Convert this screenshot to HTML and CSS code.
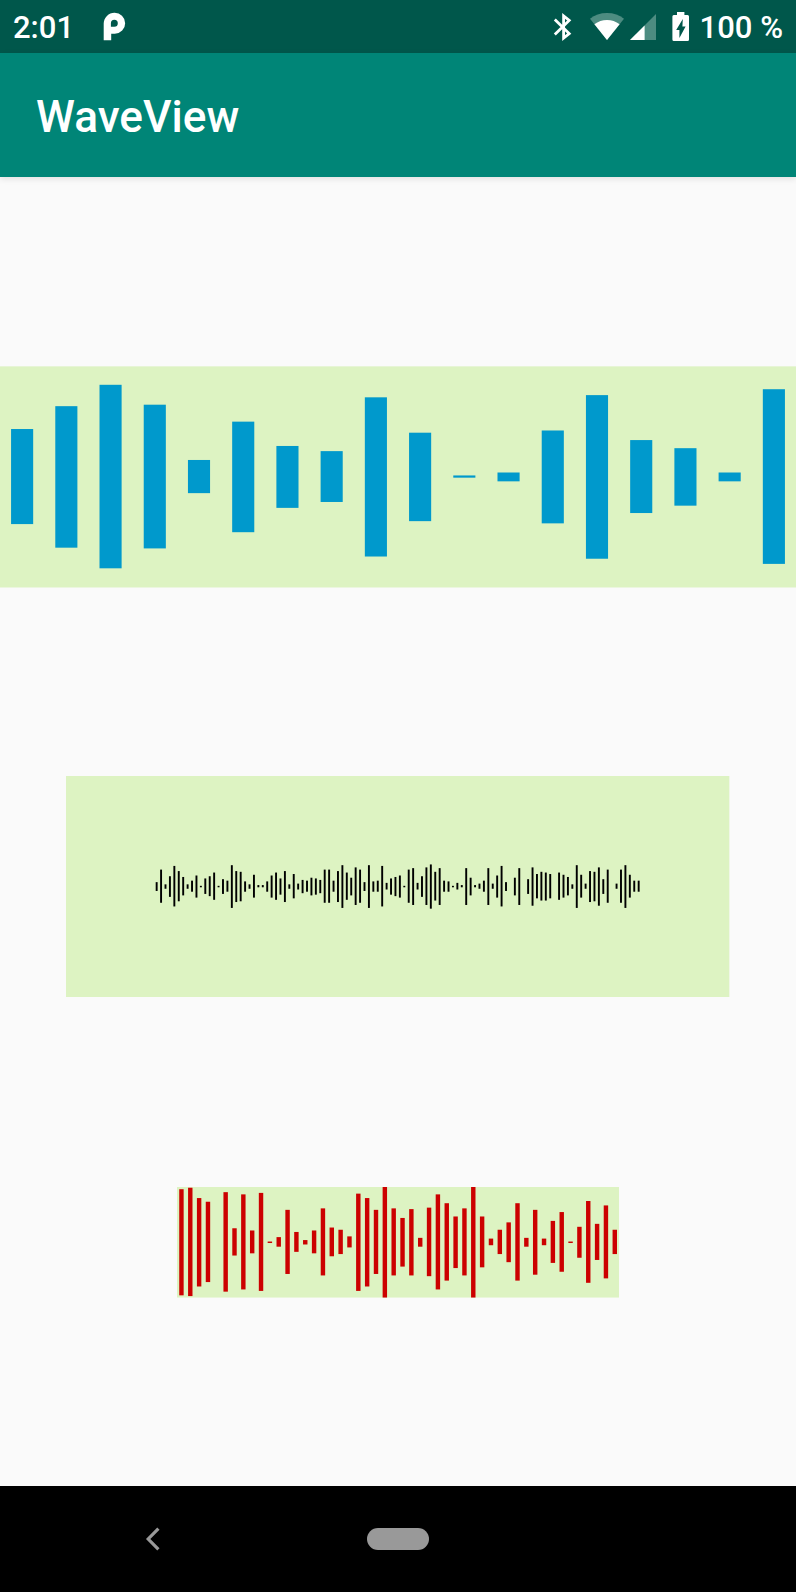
FILE: index.html
```
<!DOCTYPE html>
<html lang="en">
<head>
<meta charset="utf-8">
<title>WaveView</title>
<link rel="stylesheet" href="styles.css">
</head>
<body>
<div class="screen">
  <div class="status-bar">
    <span class="clock">2:01</span>
    <svg class="icon-p" width="24" height="30" viewBox="0 0 24 30"><path fill="#fff" fill-rule="evenodd" d="M1.7 28.3V11.5A10.8 10.8 0 0 1 12.5 .8A10.4 10.4 0 0 1 12.8 21.8H9.2V28.3ZM12.3 7.8A3.5 3.5 0 0 0 8.9 11.3V14.8H12.3A3.5 3.5 0 0 0 12.3 7.8Z"/></svg>
    <div class="status-icons">
      <svg class="icon-bt" width="20" height="30" viewBox="0 0 20 30"><path fill="none" stroke="#fff" stroke-width="2.8" d="M1.8 7.4L16.2 21.6L10.6 26V4L16.2 8.4L1.8 22.6"/></svg>
      <svg class="icon-wifi" width="36" height="30" viewBox="0 0 36 30"><path fill="#4d8c81" d="M18 28L1 6.8Q8 1 18 1T35 6.8Z"/><path fill="#fff" d="M18 28L5.4 12.2Q11 7.9 18 7.9T30.6 12.2Z"/></svg>
      <svg class="icon-cell" width="26" height="30" viewBox="0 0 26 30"><path fill="#4d8c81" d="M0 28L26 2V28Z"/><path fill="#fff" d="M0 28L14.6 13.4V28Z"/></svg>
      <svg class="icon-battery" width="18" height="30" viewBox="0 0 18 30"><path fill="#fff" fill-rule="evenodd" d="M5 0H12.4V3H15.6Q17 3 17 4.5V27.5Q17 29 15.6 29H1.8Q.4 29 .4 27.5V4.5Q.4 3 1.8 3H5ZM10.8 7L4.2 18H7.4V26L13.6 14.4H10.4Z"/></svg>
      <span class="battery-text">100 %</span>
    </div>
  </div>
  <header class="app-bar"><h1 class="title">WaveView</h1></header>
  <main class="content">
    <svg class="wave wave-large" viewBox="0 0 1080 301" data-wave="large"></svg>
    <svg class="wave wave-medium" viewBox="0 0 900 300" data-wave="medium"></svg>
    <svg class="wave wave-small" viewBox="0 0 600 150" data-wave="small"></svg>
  </main>
  <nav class="nav-bar">
    <svg class="nav-back" width="16" height="24" viewBox="0 0 16 24"><path fill="none" stroke="#999" stroke-width="3.2" d="M13.4 1.6L3.2 12L13.4 22.4"/></svg>
    <div class="nav-home"></div>
    <div></div>
  </nav>
</div>
<script src="waves.js"></script>
</body>
</html>
```
FILE: styles.css
```
html, body { margin: 0; padding: 0; }
.screen {
  width: 796px;
  height: 1592px;
  display: flex;
  flex-direction: column;
  overflow: hidden;
  background: #fafafa;
  font-family: Roboto, "Liberation Sans", sans-serif;
  color: #fff;
}
.status-bar {
  flex: 0 0 53px;
  box-sizing: border-box;
  display: flex;
  align-items: center;
  padding: 1px 13px 0 13px;
  background: #00574b;
  font-size: 31px;
  font-weight: 500;
  line-height: 36px;
}
.clock { width: 60px; padding-top: 2px; }
.icon-p { margin-left: 29px; }
.status-icons { margin-left: auto; display: flex; align-items: center; }
.icon-wifi { margin-left: 16px; }
.icon-cell { margin-left: 5px; }
.icon-battery { margin-left: 16px; }
.battery-text { margin-left: 10px; padding-top: 2px; white-space: nowrap; }
.app-bar {
  flex: 0 0 124px;
  box-sizing: border-box;
  display: flex;
  align-items: center;
  padding: 3px 36px 0;
  background: #008577;
  box-shadow: 0 2px 6px rgba(0, 0, 0, .1);
}
.title { margin: 0; font-size: 44.2px; font-weight: 500; line-height: 52px; }
.content {
  flex: 1;
  display: flex;
  flex-direction: column;
  align-items: center;
  padding-top: 189px;
}
.wave { display: block; flex: none; overflow: hidden; }
.wave-large { width: 796px; height: 221.85px; }
.wave-medium { width: 663.33px; height: 221.11px; margin-top: 188.15px; }
.wave-small { width: 442.22px; height: 110.56px; margin-top: 189.9px; }
.nav-bar {
  flex: 0 0 106px;
  display: grid;
  grid-template-columns: 1fr 62px 1fr;
  align-items: center;
  background: #000;
}
.nav-back { margin-left: 145px; }
.nav-home { height: 22px; border-radius: 11px; background: #999; }
```
FILE: waves.js
```
// Each wave is a list of amplitudes in percent of the wave's height.
const waves = {
  large: {
    color: "#0099cc", x: 15, step: 60, bar: 30, height: 300, top: 0.5,
    data: [43,64,83,65,15,50,28,23,72,40,1,4,42,74,33,26,4,79]
  },
  medium: {
    color: "#000000", x: 121.7, step: 6, bar: 2.6, height: 60, top: 0,
    data: [20,75,10,47,93,69,42,10,25,50,4,35,46,63,4,34,26,97,70,67,24,10,
      52,6,6,24,50,63,37,70,10,55,14,30,25,40,37,30,76,75,25,70,97,63,
      40,86,75,20,97,24,26,93,16,37,44,50,2,76,84,16,47,86,100,65,84,26,
      24,2,16,6,84,40,6,12,25,84,12,50,93,20,0,40,84,0,34,87,55,65,
      64,55,0,62,52,42,10,97,52,12,70,67,87,34,76,0,12,76,97,52,25,25]
  },
  small: {
    color: "#cc0000", x: 3, step: 12, bar: 6, height: 150, top: 0,
    data: [96,98,80,73,0,90,25,86,21,89,1,9,58,18,4,21,61,26,22,10,88,80,58,100,61,
      44,60,8,62,86,70,47,61,100,46,6,22,36,70,8,59,6,38,54,1,28,74,33,66,22]
  }
};

function rect(x, y, width, height, fill) {
  const el = document.createElementNS("http://www.w3.org/2000/svg", "rect");
  Object.entries({ x, y, width, height, fill }).forEach(([k, v]) => el.setAttribute(k, v));
  return el;
}

document.querySelectorAll("[data-wave]").forEach((svg) => {
  const wave = waves[svg.dataset.wave];
  const view = svg.viewBox.baseVal;
  svg.append(rect(0, wave.top, view.width, wave.top ? 300 : view.height, "#ddf3c2"));
  wave.data.forEach((value, i) => {
    if (!value) return;
    const h = Math.max(2, Math.floor(wave.height * value / 100));
    const y = Math.floor((view.height - wave.top - h) / 2) + wave.top;
    svg.append(rect(wave.x + i * wave.step, y, wave.bar, h, wave.color));
  });
});
```
